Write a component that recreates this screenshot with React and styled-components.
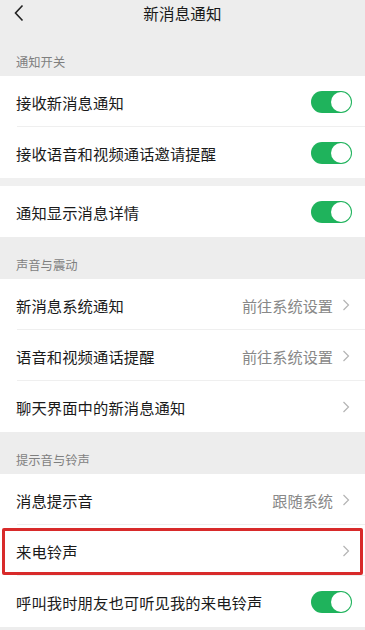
import styled, { createGlobalStyle } from "styled-components"

const GlobalStyle = createGlobalStyle`
  html, body {
    margin: 0;
    padding: 0;
    background: #ededed;
  }
  body {
    font-family: "Noto Sans CJK SC", "Noto Sans", sans-serif;
  }
`

const Page = styled.div`
  width: 365px;
  min-height: 630px;
  background: #ededed;
  display: flex;
  flex-direction: column;
`

const Header = styled.div`
  height: 34px;
  display: flex;
  justify-content: center;
  align-items: flex-start;
  position: relative;
`

const Title = styled.div`
  font-size: 15.5px;
  line-height: 26px;
  color: #191919;
  letter-spacing: 0.2px;
`

const BackButton = styled.div`
  position: absolute;
  left: 13px;
  top: 4px;
  width: 12px;
  height: 18px;
  display: flex;
`

const SectionLabel = styled.div`
  height: 42px;
  box-sizing: border-box;
  padding: 0 16px 6px;
  display: flex;
  align-items: flex-end;
  font-size: 12.3px;
  line-height: 16px;
  color: #7f7f7f;
`

const Group = styled.div`
  background: #fff;
`

const Gap = styled.div`
  height: 8px;
  background: #f0f0f0;
`

const Row = styled.div`
  position: relative;
  height: 51px;
  display: flex;
  align-items: center;
  padding: 0 13px 0 16px;
  &:not(:last-child)::after {
    content: "";
    position: absolute;
    left: 17px;
    right: 0;
    bottom: 0;
    height: 1px;
    background: #efefef;
  }
`

const Label = styled.div`
  flex: 1;
  font-size: 15.3px;
  color: #1a1a1a;
  letter-spacing: 0.1px;
`

const Value = styled.div`
  font-size: 15.2px;
  color: #888;
  margin-right: 9px;
`

const Chevron = styled.svg`
  width: 8px;
  height: 12px;
  margin-right: 2px;
`

const Switch = styled.div`
  width: 41px;
  height: 22px;
  border-radius: 11px;
  background: #1fb35c;
  display: flex;
  align-items: center;
  justify-content: flex-end;
  padding: 0 1px;
  box-sizing: border-box;
`

const Knob = styled.div`
  width: 20px;
  height: 20px;
  border-radius: 50%;
  background: #fff;
`

const Highlight = styled.div`
  position: absolute;
  left: 2px;
  right: 2px;
  top: 3px;
  bottom: 1px;
  border: 3px solid #d82a2a;
  border-radius: 2px;
  pointer-events: none;
`

function Arrow() {
  return (
    <Chevron viewBox="0 0 8 12">
      <polyline points="1.5,1 6.5,6 1.5,11" fill="none" stroke="#b4b4b4" strokeWidth="1.2" />
    </Chevron>
  )
}

function Toggle() {
  return (
    <Switch>
      <Knob />
    </Switch>
  )
}

function App() {
  return (
    <Page>
      <GlobalStyle />
      <Header>
        <BackButton>
          <svg viewBox="0 0 12 18" width="12" height="18">
            <polyline points="9.5,1.5 2.5,9 9.5,16.5" fill="none" stroke="#222" strokeWidth="1.6" />
          </svg>
        </BackButton>
        <Title>新消息通知</Title>
      </Header>

      <SectionLabel>通知开关</SectionLabel>
      <Group>
        <Row>
          <Label>接收新消息通知</Label>
          <Toggle />
        </Row>
        <Row>
          <Label>接收语音和视频通话邀请提醒</Label>
          <Toggle />
        </Row>
      </Group>
      <Gap />
      <Group>
        <Row>
          <Label>通知显示消息详情</Label>
          <Toggle />
        </Row>
      </Group>

      <SectionLabel>声音与震动</SectionLabel>
      <Group>
        <Row>
          <Label>新消息系统通知</Label>
          <Value>前往系统设置</Value>
          <Arrow />
        </Row>
        <Row>
          <Label>语音和视频通话提醒</Label>
          <Value>前往系统设置</Value>
          <Arrow />
        </Row>
        <Row>
          <Label>聊天界面中的新消息通知</Label>
          <Arrow />
        </Row>
      </Group>

      <SectionLabel>提示音与铃声</SectionLabel>
      <Group>
        <Row>
          <Label>消息提示音</Label>
          <Value>跟随系统</Value>
          <Arrow />
        </Row>
        <Row>
          <Label>来电铃声</Label>
          <Arrow />
          <Highlight />
        </Row>
        <Row>
          <Label>呼叫我时朋友也可听见我的来电铃声</Label>
          <Toggle />
        </Row>
      </Group>
    </Page>
  )
}

export default App
